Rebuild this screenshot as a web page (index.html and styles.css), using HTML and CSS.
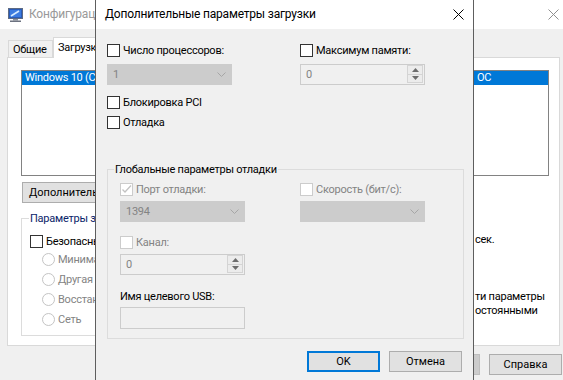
FILE: index.html
```html
<!DOCTYPE html>
<html lang="ru">
<head>
    <meta charset="UTF-8">
    <meta name="viewport" content="width=device-width, initial-scale=1.0">
    <title>Дополнительные параметры загрузки</title>
    <link rel="stylesheet" href="styles.css">
</head>
<body>
<div class="desktop">

    <!-- Background window: msconfig, Boot tab -->
    <div class="window msconfig">
        <div class="titlebar inactive">
            <svg class="app-icon" viewBox="0 0 16 14" width="16" height="14">
                <rect x="0.5" y="0.5" width="14" height="10" fill="#2a5cb8" stroke="#5d6b84"/>
                <rect x="2" y="2" width="11" height="7" fill="#3b7be0"/>
                <path d="M3 8 L11 3" stroke="#d6ecff" stroke-width="1.6"/>
                <rect x="5" y="11" width="5" height="1.5" fill="#8c929c"/>
                <rect x="2" y="12.5" width="11" height="1.5" fill="#6c7280"/>
            </svg>
            <span class="title-text">Конфигурация системы</span>
            <span class="close-btn">
                <svg width="11" height="11" viewBox="0 0 11 11"><path d="M0.5 0.5L10.5 10.5M10.5 0.5L0.5 10.5" stroke="#8f8f8f" stroke-width="1"/></svg>
            </span>
        </div>

        <div class="tabs">
            <div class="tab tab-general">Общие</div>
            <div class="tab active">Загрузка</div>
        </div>

        <div class="tab-panel">
            <div class="os-list">
                <div class="os-item selected"><span class="os-name">Windows 10 (C:\Windows) : Текущая ОС; Загружаемая по умолчанию&nbsp;</span>ОС</div>
            </div>

            <div class="list-buttons">
                <button class="btn">Дополнительные параметры...</button>
            </div>

            <div class="boot-area">
                <div class="group boot-options">
                    <span class="group-label navy">Параметры загрузки</span>
                    <div class="boot-column">
                        <div class="check"><span class="box"></span>Безопасный режим</div>
                        <div class="radio disabled"><span class="dot"></span>Минимальная</div>
                        <div class="radio disabled"><span class="dot"></span>Другая оболочка</div>
                        <div class="radio disabled"><span class="dot"></span>Восстановление Active Directory</div>
                        <div class="radio disabled"><span class="dot"></span>Сеть</div>
                    </div>
                </div>

                <div class="boot-side">
                    <div class="timeout">
                        <span class="timeout-input">30</span>
                        <span>сек.</span>
                    </div>
                    <div class="persist">
                        <span class="box"></span>
                        <div class="persist-text">
                            <div><span class="cut">Сделать э</span>ти параметры</div>
                            <div><span class="cut">загрузки п</span>остоянными</div>
                        </div>
                    </div>
                </div>
            </div>
        </div>

        <div class="footer">
            <button class="btn wide" disabled>Применить</button>
            <button class="btn wide">Справка</button>
        </div>
    </div>

    <!-- Modal dialog on top -->
    <div class="window dialog">
        <div class="titlebar">
            <span class="title-text">Дополнительные параметры загрузки</span>
            <span class="close-btn">
                <svg width="11" height="11" viewBox="0 0 11 11"><path d="M0.5 0.5L10.5 10.5M10.5 0.5L0.5 10.5" stroke="#000" stroke-width="1"/></svg>
            </span>
        </div>

        <div class="dialog-body">
            <div class="two-col">
                <div class="field">
                    <div class="check"><span class="box"></span>Число процессоров:</div>
                    <div class="select disabled">
                        <span>1</span>
                        <svg width="9" height="5" viewBox="0 0 9 5"><polyline points="0.5,0.5 4.5,4.5 8.5,0.5" fill="none" stroke="#a6a6a6"/></svg>
                    </div>
                </div>
                <div class="field">
                    <div class="check"><span class="box"></span>Максимум памяти:</div>
                    <div class="spin">
                        <span class="spin-value">0</span>
                        <span class="spin-arrows">
                            <span class="spin-arrow"><svg width="7" height="4" viewBox="0 0 7 4"><polygon points="0,4 7,4 3.5,0" fill="#6d6d6d"/></svg></span>
                            <span class="spin-arrow"><svg width="7" height="4" viewBox="0 0 7 4"><polygon points="0,0 7,0 3.5,4" fill="#6d6d6d"/></svg></span>
                        </span>
                    </div>
                </div>
            </div>

            <div class="check pci"><span class="box"></span>Блокировка PCI</div>
            <div class="check debug"><span class="box"></span>Отладка</div>

            <div class="group debug-group">
                <span class="group-label">Глобальные параметры отладки</span>
                <div class="two-col inner">
                    <div class="field">
                        <div class="check disabled">
                            <span class="box">
                                <svg width="11" height="11" viewBox="0 0 11 11"><polyline points="1.5,5.5 4,8 10,1.5" fill="none" stroke="#c2c2c2" stroke-width="1.3"/></svg>
                            </span>Порт отладки:
                        </div>
                        <div class="select disabled">
                            <span>1394</span>
                            <svg width="9" height="5" viewBox="0 0 9 5"><polyline points="0.5,0.5 4.5,4.5 8.5,0.5" fill="none" stroke="#a6a6a6"/></svg>
                        </div>
                    </div>
                    <div class="field">
                        <div class="check disabled"><span class="box"></span>Скорость (бит/с):</div>
                        <div class="select disabled">
                            <span></span>
                            <svg width="9" height="5" viewBox="0 0 9 5"><polyline points="0.5,0.5 4.5,4.5 8.5,0.5" fill="none" stroke="#a6a6a6"/></svg>
                        </div>
                    </div>
                </div>

                <div class="field channel">
                    <div class="check disabled"><span class="box"></span>Канал:</div>
                    <div class="spin">
                        <span class="spin-value">0</span>
                        <span class="spin-arrows">
                            <span class="spin-arrow"><svg width="7" height="4" viewBox="0 0 7 4"><polygon points="0,4 7,4 3.5,0" fill="#6d6d6d"/></svg></span>
                            <span class="spin-arrow"><svg width="7" height="4" viewBox="0 0 7 4"><polygon points="0,0 7,0 3.5,4" fill="#6d6d6d"/></svg></span>
                        </span>
                    </div>
                </div>

                <div class="usb-label">Имя целевого USB:</div>
                <div class="text-input disabled"></div>
            </div>

            <div class="dialog-buttons">
                <button class="btn wide default">OK</button>
                <button class="btn wide">Отмена</button>
            </div>
        </div>
    </div>

</div>
</body>
</html>
```

FILE: styles.css
```css
* {
    box-sizing: border-box;
}

body {
    margin: 0;
    width: 563px;
    height: 380px;
    overflow: hidden;
    font-family: Roboto, "Noto Sans", sans-serif;
    font-size: 11px;
    letter-spacing: -0.25px;
    line-height: 15px;
    color: #000;
    background: #f0f0f0;
}

.desktop {
    position: relative;
    width: 563px;
    height: 380px;
    overflow: hidden;
}

/* Window chrome */
.window {
    background: #f0f0f0;
}

.titlebar {
    height: 29px;
    background: #fff;
    display: flex;
    align-items: center;
    white-space: nowrap;
    font-size: 12px;
    letter-spacing: -0.2px;
}

.titlebar.inactive {
    color: #999;
    padding-left: 8px;
}

.app-icon {
    margin: 1px 5px 0 0;
}

.title-text {
    flex: 1;
}

.close-btn {
    display: flex;
    padding-right: 4px;
}

/* Background window */
.msconfig {
    width: 563px;
    height: 380px;
    overflow: hidden;
}

.tabs {
    display: flex;
    align-items: flex-end;
    padding: 8px 0 0 8px;
    margin-bottom: -1px;
    position: relative;
    z-index: 1;
    white-space: nowrap;
}

.tab {
    height: 17px;
    margin-bottom: 1px;
    padding: 1px 4px 0;
    border: 1px solid #d9d9d9;
    border-bottom: none;
    background: #f0f0f0;
}

.tab-general {
    width: 45px;
}

.tab.active {
    height: 21px;
    margin-bottom: 0;
    padding-top: 2px;
    width: 58px;
    background: #fff;
}

.tab-panel {
    height: 289px;
    margin: 0 3px 0 7px;
    padding: 12px 0 0 13px;
    border: 1px solid #d9d9d9;
    background: #fff;
}

.os-list {
    width: 528px;
    height: 106px;
    border: 1px solid #828282;
    background: #fff;
}

.os-item {
    height: 14px;
    line-height: 14px;
    padding-left: 3px;
    white-space: nowrap;
    overflow: hidden;
}

.os-item.selected {
    background: #0078d7;
    color: #fff;
}

.os-name {
    display: inline-block;
    width: 452px;
    overflow: hidden;
    vertical-align: top;
}

.list-buttons {
    display: flex;
    margin: 6px 0 0 1px;
}

.btn {
    height: 21px;
    padding: 0 6px;
    font: inherit;
    color: #000;
    background: #e1e1e1;
    border: 1px solid #adadad;
    white-space: nowrap;
}

.btn.wide {
    width: 73px;
    padding: 0;
}

.btn:disabled {
    background: #cccccc;
    border-color: #bfbfbf;
    color: #838383;
}

.btn.default {
    border: 2px solid #0078d7;
}

.boot-area {
    display: grid;
    grid-template-columns: 352px 1fr;
    column-gap: 8px;
    margin-top: 15px;
}

/* Group boxes */
.group {
    border: 1px solid #dcdcdc;
}

.group-label {
    display: table;
    margin-top: -8px;
    padding: 0 1px;
    white-space: nowrap;
}

.group-label.navy {
    color: #0a246a;
    background: #fff;
}

.boot-options {
    height: 118px;
    padding: 0 8px;
}

.boot-options .group-label {
    margin-left: -1px;
}

.boot-column {
    margin-top: 9px;
}

/* Checkboxes and radios */
.check {
    display: flex;
    align-items: center;
    height: 13px;
    white-space: nowrap;
}

.box {
    width: 13px;
    height: 13px;
    flex: none;
    margin-right: 3px;
    border: 1px solid #333;
    background: #fff;
    display: flex;
    align-items: center;
    justify-content: center;
}

.check.disabled {
    color: #838383;
}

.check.disabled .box {
    border-color: #cccccc;
}

.radio {
    display: flex;
    align-items: center;
    height: 13px;
    margin-top: 7px;
    padding-left: 12px;
    white-space: nowrap;
}

.check + .radio {
    margin-top: 5px;
}

.dot {
    width: 13px;
    height: 13px;
    flex: none;
    margin-right: 3px;
    border: 1px solid #c4c4c4;
    border-radius: 50%;
    background: #fff;
}

.radio.disabled {
    color: #838383;
}

.boot-side {
    white-space: nowrap;
}

.timeout {
    display: flex;
    align-items: center;
    height: 21px;
    margin-top: 11px;
    padding-left: 50px;
}

.timeout-input {
    width: 36px;
    height: 21px;
    margin-right: 8px;
    padding: 2px 4px;
    border: 1px solid #7a7a7a;
}

.persist {
    display: flex;
    margin-top: 40px;
    line-height: 14px;
}

.persist .box {
    margin-top: 1px;
}

.cut {
    display: inline-block;
    width: 78px;
    overflow: hidden;
    vertical-align: top;
}

.footer {
    display: flex;
    justify-content: flex-end;
    gap: 9px;
    padding: 8px 1px 0 0;
}

/* Dialog */
.dialog {
    position: absolute;
    z-index: 2;
    left: 95px;
    top: 0;
    width: 379px;
    height: 380px;
    border: 1px solid #5e5e5e;
    border-top: none;
    border-bottom: none;
}

.dialog .titlebar {
    padding-left: 9px;
}

.dialog .close-btn {
    padding-right: 9px;
}

.dialog-body {
    padding: 15px 11px 0;
}

.two-col {
    display: grid;
    grid-template-columns: 193px 1fr;
}

.two-col.inner {
    grid-template-columns: 180px 1fr;
    margin-top: 6px;
}

.field {
    display: flex;
    flex-direction: column;
    gap: 7px;
}

.debug-group .field {
    gap: 5px;
}

.select {
    width: 125px;
    height: 21px;
    padding: 0 5px;
    display: flex;
    align-items: center;
    justify-content: space-between;
    border: 1px solid #cccccc;
    background: #cccccc;
    color: #838383;
}

.spin {
    width: 125px;
    height: 21px;
    display: flex;
    border: 1px solid #cccccc;
    background: #f0f0f0;
}

.spin-value {
    flex: 1;
    padding-left: 5px;
    line-height: 19px;
    color: #838383;
}

.spin-arrows {
    width: 16px;
    margin: 0 1px 1px 0;
    display: flex;
    flex-direction: column;
}

.spin-arrow {
    flex: 1;
    display: flex;
    align-items: center;
    justify-content: center;
    border: 1px solid #d4d4d4;
    background: #ececec;
}

.spin-arrow + .spin-arrow {
    border-top: none;
}

.check.pci {
    margin-top: 11px;
}

.check.debug {
    margin-top: 7px;
}

.debug-group {
    width: 357px;
    margin-top: 40px;
    padding: 0 12px 9px;
}

.debug-group .group-label {
    margin-left: -6px;
    background: #f0f0f0;
}

.field.channel {
    margin-top: 14px;
}

.usb-label {
    margin-top: 14px;
}

.text-input {
    width: 125px;
    height: 22px;
    margin-top: 3px;
    border: 1px solid #cccccc;
    background: #f0f0f0;
}

.dialog-buttons {
    display: flex;
    justify-content: flex-end;
    gap: 9px;
    margin-top: 12px;
}
```
